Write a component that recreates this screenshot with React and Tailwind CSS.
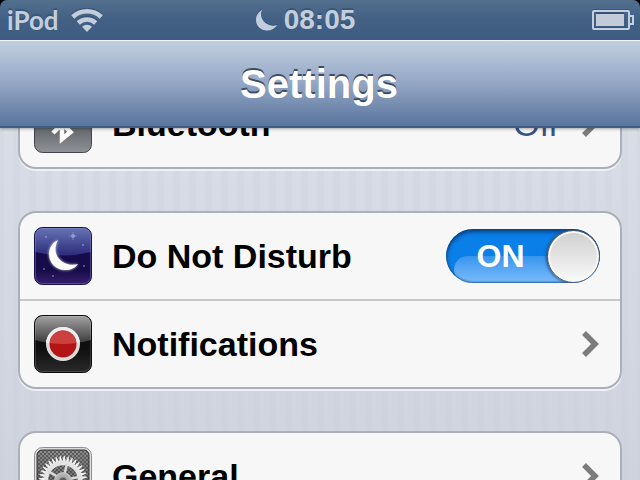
import React, { useState } from "react";

const STARS = [
  [12, 10, 1], [39, 9, 2], [49, 18, 1], [10, 42, 1], [19, 49, 1], [50, 39, 1],
];

const TEETH = Array.from({ length: 36 }, (_, i) => i * 10);

function WifiIcon() {
  return (
    <svg width="32" height="24" viewBox="0 0 32 24" aria-hidden="true">
      <g fill="none" strokeWidth="4" transform="translate(0 -2)" stroke="#2f4a6d" opacity="0.5">
        <path d="M1.8 9a20.5 20.5 0 0 1 28.4 0" />
        <path d="M7.300 15a12.500 12.500 0 0 1 17.400 0" />
      </g>
      <g fill="none" stroke="#c3cedd" strokeWidth="4.600">
        <path d="M1.8 9a20.5 20.5 0 0 1 28.4 0" />
        <path d="M7.300 15a12.500 12.500 0 0 1 17.400 0" />
      </g>
      <path d="M16 24l-5-5.200a7 7 0 0 1 10 0z" fill="#c3cedd" />
    </svg>
  );
}

function MoonIcon() {
  return (
    <svg width="22" height="24" viewBox="0 0 22 24" aria-hidden="true">
      <path d="M6.5 0C2.500 2.500 0 6.500 0 11c0 6.300 5 11 11 11 4.500 0 8.500-2 10.500-6-2 1-4 1.200-6 .8C9.500 15.800 5 10.500 5 4.500 5 2.800 5.500 1.300 6.500 0z" fill="#2f4a6d" opacity="0.6" />
      <path d="M6.500 1.500C2.500 4 0 7.500 0 12c0 6 5 10.500 11 10.500 4.500 0 8-2 10.300-5.500-2 .8-3.900 1-5.900.6C9.400 16.500 5 11.500 5 6c0-1.800.5-3.200 1.500-4.500z" fill="#c3cedd" />
    </svg>
  );
}

function BatteryIcon() {
  return (
    <svg width="42" height="22" viewBox="0 0 42 22" role="img" aria-label="Battery">
      <rect x="1" y="1" width="36" height="18" rx="1" fill="none" stroke="#2f4a6d" strokeWidth="2" opacity="0.5" />
      <rect x="1" y="2" width="36" height="18" rx="1" fill="none" stroke="#c3d0e0" strokeWidth="2" />
      <path d="M38 7h3v8h-3" fill="none" stroke="#c3d0e0" strokeWidth="2" />
      <rect x="4" y="5" width="28" height="12" fill="#c3cbd8" />
      <path d="M4 4h28" stroke="#2f4a6d" strokeWidth="2" opacity="0.7" />
    </svg>
  );
}

function BluetoothTile() {
  return (
    <svg width="58" height="58" viewBox="0 0 58 58" className="shrink-0" aria-hidden="true">
      <defs>
        <linearGradient id="bt" x2="0" y2="1">
          <stop offset="0" stopColor="#55595e" />
          <stop offset="0.55" stopColor="#62666b" />
          <stop offset="1" stopColor="#8e9297" />
        </linearGradient>
      </defs>
      <rect x="0.500" y="0.500" width="57" height="57" rx="8" fill="url(#bt)" stroke="#43434d" />
      <path d="M19 38L37 20 28 11v33l8.500-7L19 20" fill="none" stroke="#fff" strokeWidth="4.500" />
    </svg>
  );
}

function MoonTile() {
  return (
    <svg width="58" height="58" viewBox="0 0 58 58" className="shrink-0" aria-hidden="true">
      <defs>
        <linearGradient id="night" x2="0" y2="1">
          <stop offset="0" stopColor="#1c1763" />
          <stop offset="0.45" stopColor="#150c4b" />
          <stop offset="0.75" stopColor="#170b48" />
          <stop offset="1" stopColor="#36206e" />
        </linearGradient>
        <linearGradient id="nightGloss" x2="0" y2="1">
          <stop offset="0" stopColor="#6672b4" />
          <stop offset="1" stopColor="#2c2c7a" />
        </linearGradient>
        <filter id="glow" x="-30%" y="-30%" width="160%" height="160%">
          <feGaussianBlur stdDeviation="1.500" />
        </filter>
      </defs>
      <rect x="0.500" y="0.500" width="57" height="57" rx="8" fill="url(#night)" stroke="#17124f" />
      <path d="M1 9a8 8 0 0 1 8-8h40a8 8 0 0 1 8 8v16Q29 32 1 25z" fill="url(#nightGloss)" />
      <rect x="1.500" y="1.500" width="55" height="55" rx="7" fill="none" stroke="#9a9fd4" strokeOpacity="0.35" />
      {STARS.map(([x, y, r]) => (
        <circle key={`${x}-${y}`} cx={x} cy={y} r={r} fill="#b9bdf0" opacity="0.5" />
      ))}
      <path d="M39 5v8M35 9h8" stroke="#c8ccf4" strokeWidth="0.700" opacity="0.5" />
      <path d="M24 13c-6 3-9 8-9 14 0 9 7 16 16 16 6 0 10-2 13-6-12 4-29-7-20-24z" fill="#fff" opacity="0.8" filter="url(#glow)" />
      <path d="M24 13c-6 3-9 8-9 14 0 9 7 16 16 16 6 0 10-2 13-6-12 4-29-7-20-24z" fill="#fdfdfb" />
    </svg>
  );
}

function RecordTile() {
  return (
    <svg width="58" height="58" viewBox="0 0 58 58" className="shrink-0" aria-hidden="true">
      <defs>
        <linearGradient id="black" x2="0" y2="1">
          <stop offset="0" stopColor="#0a0a0a" />
          <stop offset="0.6" stopColor="#101010" />
          <stop offset="1" stopColor="#2a2a2a" />
        </linearGradient>
        <linearGradient id="blackGloss" x2="0" y2="1">
          <stop offset="0" stopColor="#a2a2a2" />
          <stop offset="1" stopColor="#363636" />
        </linearGradient>
        <clipPath id="glossClip">
          <path d="M1 9a8 8 0 0 1 8-8h40a8 8 0 0 1 8 8v16Q29 33 1 25z" />
        </clipPath>
      </defs>
      <rect x="0.500" y="0.500" width="57" height="57" rx="8" fill="url(#black)" stroke="#0b0b0b" />
      <path d="M1 9a8 8 0 0 1 8-8h40a8 8 0 0 1 8 8v16Q29 33 1 25z" fill="url(#blackGloss)" />
      <rect x="1.500" y="1.500" width="55" height="55" rx="7" fill="none" stroke="#fff" strokeOpacity="0.15" />
      <circle cx="29" cy="29" r="17" fill="#dcdcdc" />
      <circle cx="29" cy="29" r="17" fill="#efefef" clipPath="url(#glossClip)" />
      <circle cx="29" cy="29" r="13.500" fill="#b31414" />
      <circle cx="29" cy="29" r="13.500" fill="#cc4040" clipPath="url(#glossClip)" />
    </svg>
  );
}

function GearTile() {
  return (
    <svg width="58" height="58" viewBox="0 0 58 58" className="shrink-0" aria-hidden="true">
      <defs>
        <linearGradient id="plate" x2="0" y2="1">
          <stop offset="0" stopColor="#8c8c8c" />
          <stop offset="1" stopColor="#5a5a5a" />
        </linearGradient>
        <radialGradient id="hub">
          <stop offset="0" stopColor="#8a8a8a" />
          <stop offset="1" stopColor="#c4c4c4" />
        </radialGradient>
        <pattern id="dots" width="4" height="4" patternUnits="userSpaceOnUse">
          <circle cx="1" cy="1" r="0.800" fill="#222" />
          <circle cx="3" cy="3" r="0.800" fill="#222" />
        </pattern>
        <clipPath id="plateClip">
          <rect x="3" y="3" width="52" height="52" rx="6" />
        </clipPath>
      </defs>
      <rect x="0.500" y="0.500" width="57" height="57" rx="8" fill="#dedede" stroke="#8f8f8f" />
      <rect x="3" y="3" width="52" height="52" rx="5" fill="url(#plate)" />
      <rect x="3" y="3" width="52" height="52" rx="5" fill="url(#dots)" stroke="#333" />
      <g clipPath="url(#plateClip)">
        {TEETH.map((a) => (
          <path key={a} d="M27.400 15l1.100-6h1l1.100 6z" fill="#f4f4f4" transform={`rotate(${a + 3} 29 33)`} />
        ))}
        <circle cx="29" cy="33" r="17" fill="none" stroke="#e4e4e4" strokeWidth="4.500" />
        <path d="M29 33L33 17M29 33L14 24M29 33L45 30M29 33L17 46M29 33L37 48" stroke="#dadada" strokeWidth="2.500" />
        <circle cx="29" cy="34" r="9" fill="url(#hub)" />
        <circle cx="29" cy="34" r="3.500" fill="#606060" />
      </g>
    </svg>
  );
}

function Chevron() {
  return (
    <svg width="18" height="26" viewBox="0 0 18 26" className="shrink-0" aria-hidden="true">
      <path d="M2 2l11 11L2 24" fill="none" stroke="#7c7c7c" strokeWidth="5.500" />
    </svg>
  );
}

function Group({ children }) {
  return (
    <section className="divide-y-2 divide-[#c6c7c9] overflow-hidden rounded-[18px] border-2 border-[#abafb8] bg-[#f7f7f7] shadow-[0_2px_0_#eef0f5]">
      {children}
    </section>
  );
}

function LinkRow({ icon, label, value }) {
  return (
    <a href="#" className="flex h-[86px] items-center gap-5 pr-5 pl-3.5">
      {icon}
      <span className="grow text-[34px] leading-10 font-bold text-black">{label}</span>
      {value && <span className="pr-1 text-[34px] leading-10 text-[#385487]">{value}</span>}
      <Chevron />
    </a>
  );
}

function ToggleRow({ icon, label }) {
  const [on, setOn] = useState(true);
  return (
    <label className="flex h-[88px] items-center gap-5 pr-5 pl-3.5">
      {icon}
      <span className="grow text-[34px] leading-10 font-bold text-black">{label}</span>
      <span className={`relative flex h-[54px] w-[154px] shrink-0 items-center overflow-hidden rounded-full ${on ? "bg-[#0a7fe8]" : "flex-row-reverse bg-[#e6e6e6]"}`}>
        <input type="checkbox" checked={on} onChange={() => setOn(!on)} className="absolute inset-0 appearance-none" />
        <span className="absolute top-1/2 right-0 bottom-0 left-2 rounded-t-full rounded-l-full bg-linear-to-b from-[#3694ee] to-[#79bcfb]" />
        <span className="absolute inset-0 rounded-full shadow-[inset_0_3px_4px_#0a3f80,inset_0_0_2px_1px_#2b5f9c]" />
        <span className={`relative grow pl-2 text-center text-[32px] leading-10 font-bold ${on ? "text-white" : "text-[#7c7c7c]"}`}>
          {on ? "ON" : "OFF"}
        </span>
        <span className="relative size-[53px] rounded-full border border-[#55585c] bg-linear-to-b from-[#cfcfcf] to-[#fafafa] shadow-[inset_0_0_0_2px_#f8f8f8,-1px_0_3px_#1d4c80]" />
      </span>
    </label>
  );
}

export default function App() {
  return (
    <div className="flex h-screen flex-col overflow-hidden bg-black font-['Liberation_Sans',Arial,sans-serif]">
      <header className="relative z-10 shadow-[0_1px_3px_#00000055]">
        <div className="grid h-10 grid-cols-3 items-center rounded-t-[7px] bg-linear-to-b from-[#54708f] via-[#416084] to-[#3e5c81] pr-1.5 pl-[7px] text-[#c3cedd]">
          <div className="flex items-center gap-3">
            <span className="font-['Lato',sans-serif] text-[26px] leading-10 font-bold [text-shadow:0_-2px_1px_#2f4a6d99]">iPod</span>
            <WifiIcon />
          </div>
          <div className="flex items-center justify-center gap-1.5 pr-[30px]">
            <MoonIcon />
            <time className="text-[28px] leading-10 font-bold [text-shadow:0_-2px_0_#2f4a6d99]">08:05</time>
          </div>
          <div className="flex justify-end">
            <BatteryIcon />
          </div>
        </div>
        <div className="flex h-[88px] items-center justify-center border-t border-b-2 border-t-[#eef2f7] border-b-[#415d87] bg-linear-to-b from-[#c1cfdf] via-[#93a6c5] to-[#5a759c] pr-0.5">
          <h1 className="text-[40px] leading-12 font-bold text-white [text-shadow:0_-2px_0_#3f4d62]">Settings</h1>
        </div>
      </header>
      <main className="min-h-0 grow overflow-hidden bg-linear-to-b from-[#d9dde6] to-[#cfd3de]">
        <div className="flex flex-col gap-[42px] bg-[repeating-linear-gradient(90deg,#c3cbdb33_0_4px,transparent_4px_13px,#c3cbdb33_13px_16px)] px-[18px]">
          <div className="-mt-[49px]">
            <Group>
              <LinkRow icon={<BluetoothTile />} label="Bluetooth" value="Off" />
            </Group>
          </div>
          <Group>
            <ToggleRow icon={<MoonTile />} label="Do Not Disturb" />
            <LinkRow icon={<RecordTile />} label="Notifications" />
          </Group>
          <Group>
            <LinkRow icon={<GearTile />} label="General" />
          </Group>
        </div>
      </main>
    </div>
  );
}
